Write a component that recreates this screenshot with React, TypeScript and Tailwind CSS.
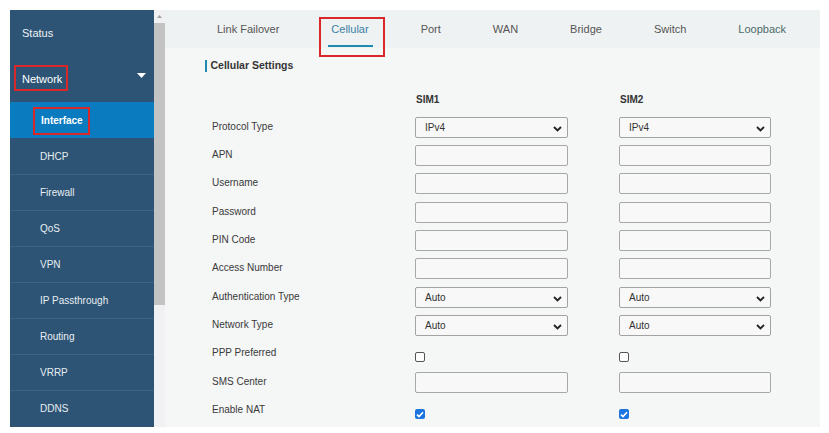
import React from "react";

const font = { fontFamily: '"Liberation Sans", Arial, sans-serif' };

const subItems = ["DHCP", "Firewall", "QoS", "VPN", "IP Passthrough", "Routing", "VRRP", "DDNS"];
const tabs = ["Link Failover", "Cellular", "Port", "WAN", "Bridge", "Switch", "Loopback"];

type Row =
  | { label: string; kind: "select"; v1: string; v2: string }
  | { label: string; kind: "input" }
  | { label: string; kind: "check"; c1: boolean; c2: boolean };

const rows: Row[] = [
  { label: "Protocol Type", kind: "select", v1: "IPv4", v2: "IPv4" },
  { label: "APN", kind: "input" },
  { label: "Username", kind: "input" },
  { label: "Password", kind: "input" },
  { label: "PIN Code", kind: "input" },
  { label: "Access Number", kind: "input" },
  { label: "Authentication Type", kind: "select", v1: "Auto", v2: "Auto" },
  { label: "Network Type", kind: "select", v1: "Auto", v2: "Auto" },
  { label: "PPP Preferred", kind: "check", c1: false, c2: false },
  { label: "SMS Center", kind: "input" },
  { label: "Enable NAT", kind: "check", c1: true, c2: true },
];

function Chevron() {
  return (
    <svg width="9" height="6" viewBox="0 0 9 6" className="absolute right-[5px] top-[8px]">
      <polyline points="1,1 4.5,4.5 8,1" fill="none" stroke="#222" strokeWidth="1.8" />
    </svg>
  );
}

function SelectBox({ value }: { value: string }) {
  return (
    <div className="relative h-[21px] border border-[#a3a3a3] rounded-[2px] bg-[#f8f8f8] flex items-center pl-[9px] text-[10px] text-[#333]">
      {value}
      <Chevron />
    </div>
  );
}

function InputBox() {
  return <div className="h-[21px] border border-[#a8a8a8] rounded-[2px] bg-[#f8f8f8]" />;
}

function Check({ on }: { on: boolean }) {
  return on ? (
    <div className="mt-[7px] w-[10px] h-[10px] rounded-[2px] bg-[#1c74e0] flex items-center justify-center">
      <svg width="8" height="7" viewBox="0 0 8 7">
        <polyline points="1,3.6 3,5.6 7,1.2" fill="none" stroke="#fff" strokeWidth="1.6" />
      </svg>
    </div>
  ) : (
    <div className="mt-[7px] w-[10px] h-[10px] rounded-[2px] border border-[#555] bg-white" />
  );
}

function Cell({ row, sim }: { row: Row; sim: 1 | 2 }) {
  if (row.kind === "select") return <SelectBox value={sim === 1 ? row.v1 : row.v2} />;
  if (row.kind === "input") return <InputBox />;
  return <Check on={sim === 1 ? row.c1 : row.c2} />;
}

export default function App() {
  return (
    <div className="w-[829px] h-[433px] bg-white pt-[10px] pl-[10px] overflow-hidden" style={font}>
      <div className="flex h-[417px] w-[810px]">
        {/* Sidebar */}
        <div className="w-[144px] h-full bg-[#2d5474] flex flex-col text-white">
          <div className="h-[46px] flex items-center pl-[12px] text-[11px] text-[#eef3f7]">Status</div>
          <div className="relative h-[46px] flex items-center pl-[12px] text-[11px]">
            <span className="relative">
              Network
              <span className="absolute -left-[8px] -top-[6px] w-[54px] h-[26px] border-2 border-[#d8282a]" />
            </span>
            <svg width="9" height="5" viewBox="0 0 9 5" className="absolute right-[8px] top-[17px]">
              <polygon points="0,0 9,0 4.5,5" fill="#fff" />
            </svg>
          </div>
          <div className="h-[36px] bg-[#0b7bc0] flex items-center pl-[31px] text-[10px] font-bold">
            <span className="relative">
              Interface
              <span className="absolute -left-[8px] -top-[6px] w-[57px] h-[28px] border-2 border-[#d8282a]" />
            </span>
          </div>
          {subItems.map((s, i) => (
            <div
              key={s}
              className={
                "h-[36px] flex items-center pl-[30px] text-[10px] text-[#e8eef3] " +
                (i === 0 ? "" : "border-t border-[#3c6383]")
              }
            >
              {s}
            </div>
          ))}
        </div>

        {/* Scrollbar */}
        <div className="w-[11px] h-full flex flex-col bg-[#f1f1f3]">
          <div className="h-[13px] flex items-center justify-center">
            <svg width="5" height="3" viewBox="0 0 5 3">
              <polygon points="0,3 5,3 2.5,0" fill="#a0a0a0" />
            </svg>
          </div>
          <div className="h-[282px] bg-[#c3c3c3]" />
          <div className="flex-1" />
        </div>

        {/* Main */}
        <div className="flex-1 h-full bg-[#f5f6f6] flex flex-col">
          <div className="h-[38px] bg-[#eff2f2] flex items-stretch pl-[52px] gap-[52px] text-[11px] text-[#555]">
            {tabs.map((t) =>
              t === "Cellular" ? (
                <div key={t} className="relative flex items-center text-[#3b7fa6]">
                  {t}
                  <span className="absolute -left-[3px] -right-[4px] bottom-[1px] h-[2px] bg-[#1d8ab0]" />
                  <span className="absolute -left-[12px] -right-[16px] top-[7px] -bottom-[9px] border-2 border-[#d8282a]" />
                </div>
              ) : (
                <div key={t} className={"flex items-center " + (t === "Loopback" ? "text-[#4b6a6a]" : "")}>
                  {t}
                </div>
              )
            )}
          </div>

          <div className="mt-[12px] pl-[40px] flex items-center h-[12px]">
            <div className="w-[1.5px] h-[12px] bg-[#1d8ab0]" />
            <div className="ml-[4px] text-[10.5px] font-bold text-[#333]">Cellular Settings</div>
          </div>

          <div className="pl-[47px] mt-[20px]">
            <div className="grid grid-cols-[203px_204px_152px] h-[12px] items-center text-[10px] font-bold text-[#333]">
              <div />
              <div className="pl-[1px]">SIM1</div>
              <div className="pl-[1px]">SIM2</div>
            </div>
            <div className="mt-[9px] grid grid-cols-[203px_153px_51px_152px] auto-rows-[28.35px] items-center text-[10px] text-[#3a3a3a]">
              {rows.map((r) => (
                <React.Fragment key={r.label}>
                  <div className="-mt-[2px]">{r.label}</div>
                  <div className="self-center">
                    <Cell row={r} sim={1} />
                  </div>
                  <div />
                  <div className="self-center">
                    <Cell row={r} sim={2} />
                  </div>
                </React.Fragment>
              ))}
            </div>
          </div>
        </div>
      </div>
    </div>
  );
}
